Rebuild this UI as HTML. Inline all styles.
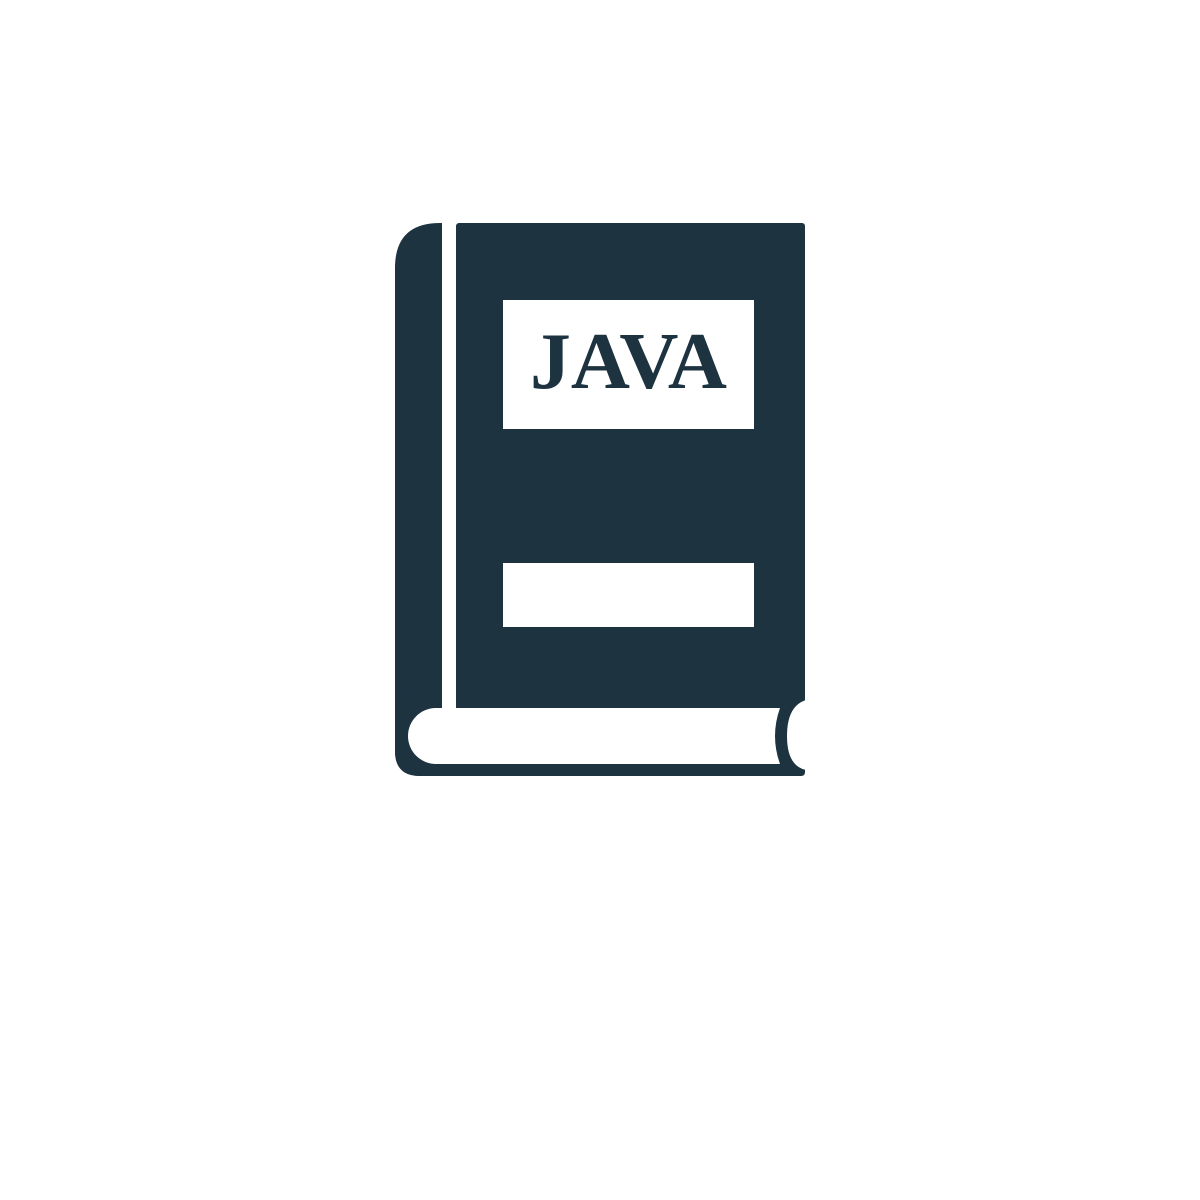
<!DOCTYPE html>
<html><head><meta charset="utf-8"><style>
html,body{margin:0;padding:0;background:#fff;width:1200px;height:1200px;overflow:hidden}
</style></head><body>
<svg width="1200" height="1200" viewBox="0 0 1200 1200" xmlns="http://www.w3.org/2000/svg">
<g fill="#1d3340">
<path d="M440,223 L442,223 L442,776 L420,776 Q395,776 395,751 L395,268 Q395,223 440,223 Z"/>
<rect x="456" y="223" width="349" height="485" rx="3"/>
<path d="M420,690 L805,690 L805,772 Q805,776 801,776 L420,776 Q395,776 395,751 L395,715 Q395,690 420,690 Z"/>
</g>
<rect x="442" y="223" width="14" height="490" fill="#fff"/>
<path fill="#fff" d="M436,708 L780,708 Q770,736 780,764 L436,764 A28,28 0 0 1 436,708 Z"/>
<path fill="#fff" d="M806,700 Q787,706 787,736 Q787,766 806,770 Z"/>
<rect x="503" y="300" width="251" height="129" fill="#fff"/>
<rect x="503" y="563" width="251" height="64" fill="#fff"/>
<text x="530" y="388" font-family="Liberation Serif, serif" font-weight="bold" font-size="80" fill="#1d3340" textLength="197" lengthAdjust="spacingAndGlyphs">JAVA</text>
</svg>
</body></html>
